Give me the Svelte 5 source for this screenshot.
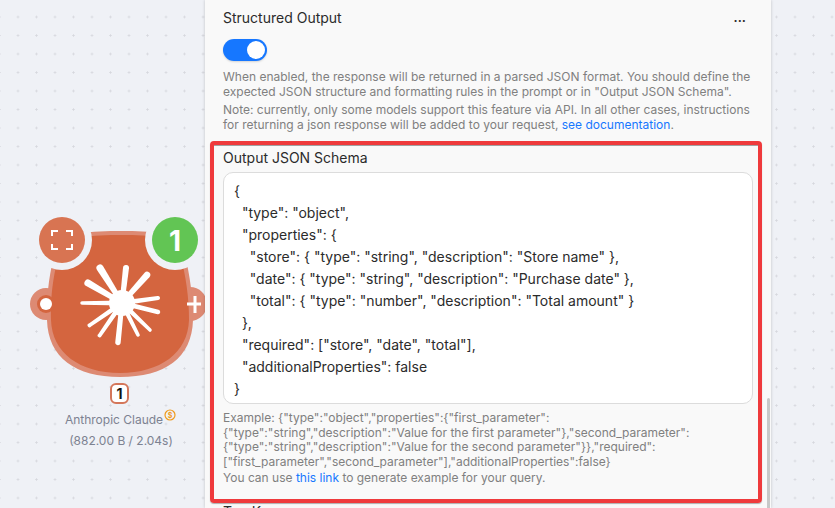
<script>
  // tips of the spark rays: x, y, width at the tip
  const cx = 122
  const cy = 113
  const rays = [
    [100, 78, 7], [126, 78, 6], [147, 85, 6.5], [158, 108, 4],
    [158, 122, 4.5], [150, 140, 3.5], [138, 145, 3.5], [118, 152, 5.5],
    [100, 145, 4], [90, 135, 4], [82, 113, 3.5], [88, 93, 7]
  ]

  function rayPath([x, y, w]) {
    const len = Math.hypot(x - cx, y - cy)
    const nx = -(y - cy) / len
    const ny = (x - cx) / len
    const r = w / 2
    const p = (px, py, k) => `${(px + nx * k).toFixed(1)} ${(py + ny * k).toFixed(1)}`
    return `M${p(cx, cy, 2.4)} L${p(x, y, r)} A${r} ${r} 0 1 0 ${p(x, y, -r)} L${p(cx, cy, -2.4)} Z`
  }
</script>

<main class="canvas">
  <div class="node">
    <svg class="blob" width="215" height="260" viewBox="0 0 215 260">
      <circle cx="46" cy="114" r="16" fill="#dd8a73" />
      <circle cx="190" cy="114" r="17" fill="#dd8a73" />
      <path d="M122 41 C150 41 178 42 184 62 C190 84 193 108 193 130 C192 168 165 187 120 187 C76 187 48 168 47 130 C46 106 50 80 55 62 C60 42 92 41 122 41 Z" fill="#dd8a73" />
      <path d="M122 45 C150 45 176 46 180 64 C186 86 189 108 189 130 C188 163 160 183 120 183 C80 183 52 163 51 130 C50 106 54 82 59 64 C64 46 92 45 122 45 Z" fill="#d4653f" />
      <circle cx="46" cy="114" r="9" fill="#d4653f" />
      <circle cx="46" cy="114" r="6" fill="#fff" />
      <path d="M187 114 h14 M195 106 v17" stroke="#fff" stroke-width="3" />
      <g fill="#fff">
        {#each rays as ray}
          <path d={rayPath(ray)} />
        {/each}
        <circle cx={cx} cy={cy} r="13" />
      </g>
      <circle cx="62" cy="50" r="30" fill="#eff1f6" />
      <circle cx="62" cy="50" r="23" fill="#d87452" />
      <path d="M52 46 V41 H58 M66 41 H72 V46 M72 54 V59 H66 M58 59 H52 V54" fill="none" stroke="#fff" stroke-width="2" />
      <circle cx="175" cy="50" r="30" fill="#eff1f6" />
      <circle cx="175" cy="50" r="23" fill="#62c554" />
      <text x="175" y="61" text-anchor="middle" class="one">1</text>
    </svg>
    <div class="count">1</div>
    <div class="name">
      Anthropic Claude
      <svg class="coin" width="12" height="12" viewBox="0 0 12 12">
        <circle cx="6" cy="6" r="5" fill="none" stroke="#f09a1a" stroke-width="1.2" />
        <text x="6" y="8.5" text-anchor="middle" class="dollar">$</text>
      </svg>
    </div>
    <div class="stats">(882.00 B / 2.04s)</div>
  </div>

  <section class="panel">
    <div class="head">
      <span>Structured Output</span>
      <span class="more">...</span>
    </div>
    <div class="toggle"><span class="knob"></span></div>
    <p class="hint first">When enabled, the response will be returned in a parsed JSON format. You should define the expected JSON structure and formatting rules in the prompt or in "Output JSON Schema".</p>
    <p class="hint">Note: currently, only some models support this feature via API. In all other cases, instructions for returning a json response will be added to your request, <a href="#docs">see documentation</a>.</p>

    <div class="marked">
      <div class="label">Output JSON Schema</div>
      <pre class="editor">{`{
  "type": "object",
  "properties": {
    "store": { "type": "string", "description": "Store name" },
    "date": { "type": "string", "description": "Purchase date" },
    "total": { "type": "number", "description": "Total amount" }
  },
  "required": ["store", "date", "total"],
  "additionalProperties": false
}`}</pre>
      <p class="hint example">Example: &#123;"type":"object","properties":&#123;"first_parameter":<br />&#123;"type":"string","description":"Value for the first parameter"&#125;,"second_parameter":<br />&#123;"type":"string","description":"Value for the second parameter"&#125;&#125;,"required":<br />["first_parameter","second_parameter"],"additionalProperties":false&#125;</p>
      <p class="hint tight">You can use <a href="#link">this link</a> to generate example for your query.</p>
    </div>
    <div class="label next">Top K</div>
    <div class="scrollbar"></div>
  </section>
</main>

<style>
  :global(body) {
    margin: 0;
  }

  .canvas {
    position: relative;
    width: 835px;
    height: 508px;
    overflow: hidden;
    background-color: #eff1f6;
    background-image: radial-gradient(circle, #d6d8de 0.9px, transparent 1.2px);
    background-size: 18.5px 18.5px;
    background-position: 8.75px 7.75px;
    font-family: Inter, "Liberation Sans", sans-serif;
  }

  .node {
    position: absolute;
    left: 0;
    top: 190px;
    width: 205px;
    height: 260px;
    overflow: hidden;
  }

  .blob {
    position: absolute;
    left: 0;
    top: 0;
  }

  .one {
    font: 700 28px Inter, sans-serif;
    fill: #fff;
  }

  .count {
    position: absolute;
    left: 110px;
    top: 193px;
    width: 19px;
    height: 21px;
    box-sizing: border-box;
    border: 2px solid #d4765a;
    border-radius: 6px;
    background: #fff;
    color: #111;
    font-size: 14px;
    font-weight: 700;
    line-height: 17px;
    text-align: center;
  }

  .name,
  .stats {
    position: absolute;
    width: 190px;
    left: 26px;
    text-align: center;
    color: #7d8291;
    font-size: 12px;
  }

  .name {
    left: 19px;
    top: 222px;
  }

  .stats {
    top: 243px;
  }

  .coin {
    position: absolute;
    left: 145px;
    top: -3px;
  }

  .dollar {
    font: 700 7px Inter, sans-serif;
    fill: #f09a1a;
  }

  .panel {
    position: absolute;
    left: 205px;
    top: 0;
    width: 566px;
    height: 508px;
    box-sizing: border-box;
    padding: 9px 20px 0 18px;
    overflow: hidden;
    background: #f9f9f9;
    box-shadow: 0 0 3px rgba(0, 0, 0, 0.2);
    color: #2b2b2b;
  }

  .head {
    display: flex;
    justify-content: space-between;
    padding-right: 5px;
    font-size: 14px;
    line-height: 17px;
  }

  .more {
    font-size: 13px;
    font-weight: 600;
  }

  .toggle {
    display: flex;
    justify-content: flex-end;
    align-items: center;
    width: 44px;
    height: 22px;
    box-sizing: border-box;
    margin-top: 13px;
    padding-right: 2px;
    border-radius: 11px;
    background: #1677ff;
    box-shadow: 0 1px 2px rgba(0, 0, 0, 0.15);
  }

  .knob {
    width: 18px;
    height: 18px;
    border-radius: 50%;
    background: #fff;
  }

  .hint {
    margin: 4px 0 0;
    font-size: 12px;
    line-height: 14.5px;
    color: #808080;
  }

  .hint.first {
    margin-top: 9px;
  }

  .hint.example {
    margin-top: 7px;
  }

  .hint.tight {
    margin-top: 2px;
  }

  .hint a {
    color: #1677ff;
    text-decoration: none;
  }

  .marked {
    width: 552px;
    height: 362px;
    box-sizing: border-box;
    margin: 9px 0 0 -13px;
    padding: 4px 9px 0;
    border: 4px solid #ef3a3c;
    border-radius: 4px;
    box-shadow: inset 0 1px 0 rgba(0, 0, 0, 0.35), 0 1px 1px rgba(0, 0, 0, 0.3);
  }

  .label {
    font-size: 14px;
    line-height: 17px;
  }

  .editor {
    width: 530px;
    height: 232px;
    box-sizing: border-box;
    margin: 6px 0 0;
    padding: 7px 10px 0;
    border: 1px solid #dcdcdc;
    border-radius: 10px;
    background: #fff;
    font-family: Inter, "Liberation Sans", sans-serif;
    font-size: 14px;
    line-height: 22px;
    color: #2b2b2b;
  }

  .next {
    margin-top: 0;
  }

  .scrollbar {
    position: absolute;
    right: 1px;
    top: 398px;
    width: 3px;
    height: 110px;
    border-radius: 2px 2px 0 0;
    background: #c8c8c8;
  }
</style>
